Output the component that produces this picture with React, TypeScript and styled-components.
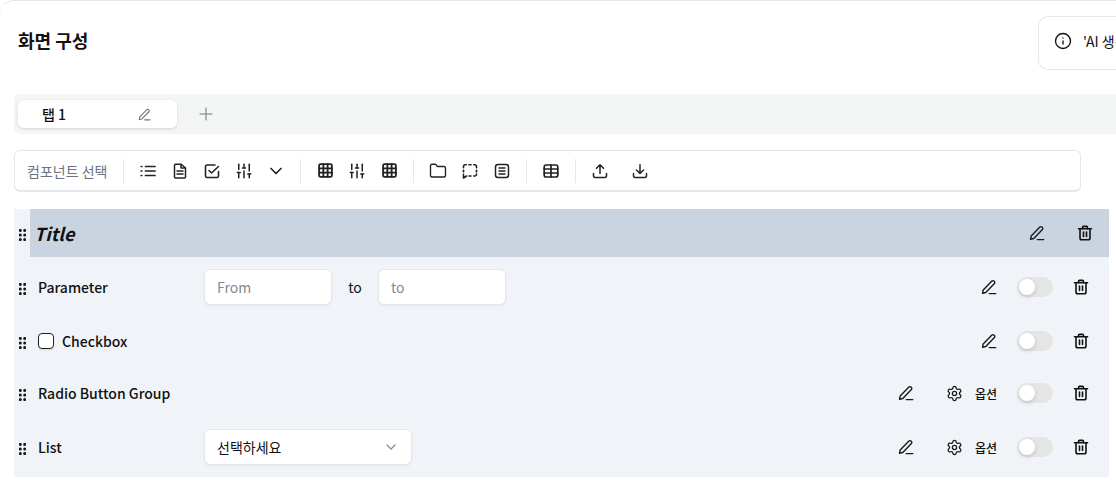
import styled, { createGlobalStyle } from 'styled-components'
import { ChevronDown, Folder, Grid3x3, Info, Plus, Settings, SlidersVertical } from 'lucide-react'
import { ReactNode } from 'react'

const Global = createGlobalStyle`
  html, body { margin: 0; padding: 0; background: #fff; overflow: hidden; }
  body { font-family: "Noto Sans CJK KR", "Noto Sans", sans-serif; color: #111; }
`
const Page = styled.div`
  width: 1116px;
  height: 480px;
  overflow: hidden;
  box-sizing: border-box;
  border-top: 1px solid #e5e7eb;
  border-top-left-radius: 14px;
  padding: 0 0 0 14px;
`
const Header = styled.div`
  height: 93px;
  display: flex;
  justify-content: space-between;
  padding-top: 15px;
  box-sizing: border-box;
`
const PageTitle = styled.h1`
  margin: 6px 0 0 4px;
  font-size: 18px;
  line-height: 36px;
  font-weight: 700;
  height: 36px;
`
const Notice = styled.div`
  width: 78px;
  height: 54px;
  box-sizing: border-box;
  border: 1px solid #e5e7eb;
  border-right: 0;
  border-radius: 10px 0 0 10px;
  display: flex;
  align-items: center;
  padding: 0 0 4px 15px;
  gap: 11px;
  font-size: 14px;
  white-space: nowrap;
  overflow: hidden;
  svg { flex: none; }
`
const TabBar = styled.div`
  height: 40px;
  background: #f4f6f6;
  border-radius: 6px 0 0 6px;
  display: flex;
  align-items: center;
  padding-left: 4px;
`
const Tab = styled.div`
  width: 159px;
  height: 28px;
  box-sizing: border-box;
  background: #fff;
  border-radius: 6px;
  box-shadow: 0 1px 3px rgba(0, 0, 0, 0.14);
  display: flex;
  align-items: center;
  justify-content: space-between;
  padding: 0 26px 0 24px;
  font-size: 14px;
  font-weight: 500;
`
const AddTab = styled.div`
  margin-left: 19px;
  display: flex;
  color: #9a9ea6;
`
const Toolbar = styled.div`
  margin-top: 16px;
  width: 1067px;
  height: 42px;
  box-sizing: border-box;
  border: 1px solid #e5e7eb;
  border-bottom-width: 2px;
  border-radius: 6px;
  display: flex;
  align-items: center;
  padding-left: 12px;
`
const ToolLabel = styled.span`
  font-size: 14px;
  color: #6b7280;
  width: 96px;
  white-space: nowrap;
`
const Divider = styled.span`
  width: 1px;
  height: 24px;
  background: #e5e7eb;
`
const ToolGroup = styled.div<{ $gap?: number }>`
  display: flex;
  align-items: center;
  gap: ${p => p.$gap ?? 16}px;
  padding: 0 16px;
  color: #222;
`
const ToolSlot = styled.span`
  width: 16px;
  height: 16px;
  display: flex;
  align-items: center;
  justify-content: center;
  svg { flex: none; }
`
const Builder = styled.div`
  margin-top: 17px;
  width: 1095px;
  background: #f0f3f8;
  height: 268px;
  display: flex;
  flex-direction: column;
`
const Grip = styled.div`
  width: 16px;
  flex: none;
  display: flex;
  justify-content: center;
  margin-top: 3px;
`
const Row = styled.div<{ $h: number }>`
  height: ${p => p.$h}px;
  display: flex;
  align-items: center;
  padding-right: 20px;
`
const TitleRow = styled(Row)`
  padding-right: 0;
`
const TitleBody = styled.div`
  flex: 1;
  height: 48px;
  background: #cad4e0;
  display: flex;
  align-items: center;
  justify-content: space-between;
  padding: 0 16px 0 4px;
`
const TitleText = styled.span`
  font-size: 18px;
  font-weight: 700;
  font-style: italic;
`
const TitleActions = styled.div`
  display: flex;
  align-items: center;
  gap: 32px;
`
const Label = styled.span`
  font-size: 14px;
  font-weight: 500;
  margin-left: 8px;
  width: 166px;
  flex: none;
`
const CheckLabel = styled.label`
  font-size: 14px;
  font-weight: 500;
  margin-left: 8px;
  display: flex;
  align-items: center;
  gap: 8px;
`
const CheckBoxMark = styled.span`
  width: 14px;
  height: 14px;
  border: 1px solid #222;
  border-radius: 4px;
  background: #fff;
  box-shadow: 0 1px 2px rgba(0, 0, 0, 0.12);
`
const Field = styled.div<{ $w: number }>`
  width: ${p => p.$w}px;
  height: 36px;
  box-sizing: border-box;
  background: #fff;
  border: 1px solid #e5e7eb;
  border-radius: 6px;
  box-shadow: 0 1px 2px rgba(0, 0, 0, 0.05);
  display: flex;
  align-items: center;
  justify-content: space-between;
  padding: 0 12px;
  font-size: 14px;
`
const Placeholder = styled.span`
  color: #85888f;
`
const Between = styled.span`
  font-size: 14px;
  width: 46px;
  text-align: center;
`
const Actions = styled.div`
  margin-left: auto;
  display: flex;
  align-items: center;
`
const OptionGroup = styled.div`
  display: flex;
  align-items: center;
  gap: 12px;
  margin-left: 32px;
  font-size: 12px;
  font-weight: 500;
`
const Toggle = styled.span`
  width: 36px;
  height: 20px;
  margin: 0 20px;
  border-radius: 10px;
  background: #e5e5e5;
  display: flex;
  align-items: center;
  &::before {
    content: '';
    width: 16px;
    height: 16px;
    margin-left: 2px;
    border-radius: 50%;
    background: #fff;
    box-shadow: 0 2px 4px rgba(0, 0, 0, 0.15);
  }
`

const Glyph = styled.svg.attrs({ viewBox: '0 0 16 16', fill: 'none', stroke: 'currentColor', strokeLinecap: 'round', strokeLinejoin: 'round' })<{ $w?: number }>`
  width: 16px;
  height: 16px;
  flex: none;
  stroke-width: ${p => p.$w ?? 1.5};
`

const GripIcon = () => (
  <svg width="7" height="12" viewBox="0 0 7 12" fill="#1a1a1a">
    {[1.4, 6, 10.6].flatMap(y => [1.3, 5.7].map(x => <circle key={`${x}-${y}`} cx={x} cy={y} r="1.5" />))}
  </svg>
)
const PenIcon = ({ size = 16, color = '#1a1a1a' }: { size?: number; color?: string }) => (
  <svg width={size} height={size} viewBox="0 0 16 16" fill="none" stroke={color} strokeWidth="1.4" strokeLinejoin="round" strokeLinecap="round">
    <path d="M1.5 14.3 2.2 11 10.9 2.1a1.4 1.4 0 0 1 2 0l.5.5a1.4 1.4 0 0 1 0 2L4.8 13.5z" />
    <path d="M8.2 14.6h6.6" />
  </svg>
)
const TrashIcon = () => (
  <Glyph $w={1.6}>
    <path d="M1.5 3.8h13" />
    <path d="M5.5 3.8V2.4a1 1 0 0 1 1-1h3a1 1 0 0 1 1 1v1.4" />
    <path d="M3 3.8v9.2a1.8 1.8 0 0 0 1.8 1.8h6.4A1.8 1.8 0 0 0 13 13V3.8" />
    <path d="M6.5 7v4.5M9.5 7v4.5" />
  </Glyph>
)
const ListIcon = () => (
  <Glyph $w={1.7}>
    <path d="M5.5 3.5h9.5M5.5 8h9.5M5.5 12.5h9.5" />
    <path d="M1.2 3.5h.6M1.2 8h.6M1.2 12.5h.6" />
  </Glyph>
)
const FileIcon = () => (
  <Glyph>
    <path d="M2.5 2.2a1 1 0 0 1 1-1h5.7L13.5 5v9a1 1 0 0 1-1 1h-9a1 1 0 0 1-1-1z" />
    <path d="M9 1.4V5h4.3" />
    <path d="M5 8h6M5 11h6" />
  </Glyph>
)
const CheckIcon = () => (
  <Glyph $w={1.6}>
    <path d="M14.5 8.5V13a1.5 1.5 0 0 1-1.5 1.5H3A1.5 1.5 0 0 1 1.5 13V3.5A1.5 1.5 0 0 1 3 2h8" />
    <path d="M5 7.5 7.5 10l7-6.5" />
  </Glyph>
)
const DashedChatIcon = () => (
  <Glyph $w={1.6}>
    <path d="M1.5 4.8V3.5a1.8 1.8 0 0 1 1.8-1.8h1" />
    <path d="M7 1.7h2" />
    <path d="M11.7 1.7h1a1.8 1.8 0 0 1 1.8 1.8v1.3" />
    <path d="M14.5 7.3v1.6" />
    <path d="M14.5 11v.2a1.8 1.8 0 0 1-1.8 1.8h-1" />
    <path d="M9 13H7" />
    <path d="M4.6 13 1.5 15v-3.6" />
    <path d="M1.5 7.3v1.6" />
  </Glyph>
)
const NoteIcon = () => (
  <Glyph $w={1.5}>
    <rect x="1.5" y="1.5" width="13" height="13" rx="2.5" />
    <path d="M4.5 5h7M4.5 8h7M4.5 11h7" strokeLinecap="butt" />
  </Glyph>
)
const TableIcon = () => (
  <Glyph $w={1.7}>
    <rect x="1.2" y="2" width="13.6" height="12" rx="2" />
    <path d="M1.2 6h13.6M1.2 10h13.6M8 2v12" />
  </Glyph>
)
const UploadIcon = () => (
  <Glyph>
    <path d="M8 10.5V1.8M4.5 5.2 8 1.8l3.5 3.4" />
    <path d="M1.5 10.5v2.5A1.5 1.5 0 0 0 3 14.5h10a1.5 1.5 0 0 0 1.5-1.5v-2.5" />
  </Glyph>
)
const DownloadIcon = () => (
  <Glyph>
    <path d="M8 1.8v8.7M4.5 7 8 10.5 11.5 7" />
    <path d="M1.5 10.5v2.5A1.5 1.5 0 0 0 3 14.5h10a1.5 1.5 0 0 0 1.5-1.5v-2.5" />
  </Glyph>
)
const SlidersIcon = () => <SlidersVertical size={18} strokeWidth={2} />
const GridIcon = () => <Grid3x3 size={17} strokeWidth={2.6} />

const Tool = ({ children }: { children: ReactNode }) => <ToolSlot>{children}</ToolSlot>

const Option = () => (
  <OptionGroup>
    <Settings size={17} strokeWidth={1.8} color="#1a1a1a" />
    <span>옵션</span>
  </OptionGroup>
)

export default function App() {
  return (
    <Page>
      <Global />
      <Header>
        <PageTitle>화면 구성</PageTitle>
        <Notice>
          <Info size={18} strokeWidth={1.8} color="#111" />
          <span>'AI 생성 안내</span>
        </Notice>
      </Header>
      <TabBar>
        <Tab>
          <span>탭 1</span>
          <PenIcon size={13} color="#777" />
        </Tab>
        <AddTab><Plus size={20} strokeWidth={1.9} /></AddTab>
      </TabBar>
      <Toolbar>
        <ToolLabel>컴포넌트 선택</ToolLabel>
        <Divider />
        <ToolGroup>
          <Tool><ListIcon /></Tool>
          <Tool><FileIcon /></Tool>
          <Tool><CheckIcon /></Tool>
          <Tool><SlidersIcon /></Tool>
          <Tool><ChevronDown size={20} strokeWidth={2} /></Tool>
        </ToolGroup>
        <Divider />
        <ToolGroup>
          <Tool><GridIcon /></Tool>
          <Tool><SlidersIcon /></Tool>
          <Tool><GridIcon /></Tool>
        </ToolGroup>
        <Divider />
        <ToolGroup>
          <Tool><Folder size={18} strokeWidth={1.8} /></Tool>
          <Tool><DashedChatIcon /></Tool>
          <Tool><NoteIcon /></Tool>
        </ToolGroup>
        <Divider />
        <ToolGroup>
          <Tool><TableIcon /></Tool>
        </ToolGroup>
        <Divider />
        <ToolGroup $gap={24}>
          <Tool><UploadIcon /></Tool>
          <Tool><DownloadIcon /></Tool>
        </ToolGroup>
      </Toolbar>
      <Builder>
        <TitleRow $h={48}>
          <Grip><GripIcon /></Grip>
          <TitleBody>
            <TitleText>Title</TitleText>
            <TitleActions><PenIcon /><TrashIcon /></TitleActions>
          </TitleBody>
        </TitleRow>
        <Row $h={60}>
          <Grip><GripIcon /></Grip>
          <Label>Parameter</Label>
          <Field $w={128}><Placeholder>From</Placeholder></Field>
          <Between>to</Between>
          <Field $w={128}><Placeholder>to</Placeholder></Field>
          <Actions><PenIcon /><Toggle /><TrashIcon /></Actions>
        </Row>
        <Row $h={48}>
          <Grip><GripIcon /></Grip>
          <CheckLabel><CheckBoxMark />Checkbox</CheckLabel>
          <Actions><PenIcon /><Toggle /><TrashIcon /></Actions>
        </Row>
        <Row $h={56}>
          <Grip><GripIcon /></Grip>
          <Label>Radio Button Group</Label>
          <Actions><PenIcon /><Option /><Toggle /><TrashIcon /></Actions>
        </Row>
        <Row $h={52}>
          <Grip><GripIcon /></Grip>
          <Label>List</Label>
          <Field $w={208}><span>선택하세요</span><ChevronDown size={16} color="#888" strokeWidth={1.8} /></Field>
          <Actions><PenIcon /><Option /><Toggle /><TrashIcon /></Actions>
        </Row>
      </Builder>
    </Page>
  )
}
